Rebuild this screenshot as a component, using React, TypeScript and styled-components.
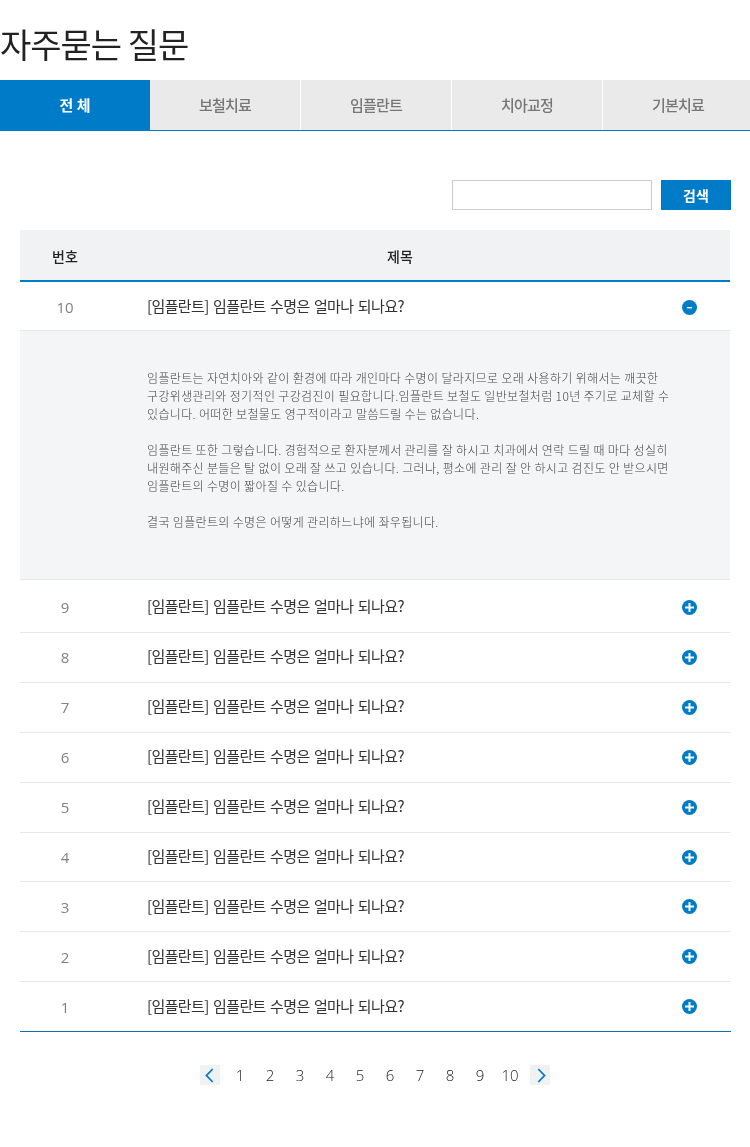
import * as React from 'react';
import styled, { createGlobalStyle } from 'styled-components';

const BLUE = '#007bc7';
const KR = '"Noto Sans CJK KR", "Noto Sans", sans-serif';

const tabs = ['전 체', '보철치료', '임플란트', '치아교정', '기본치료'];
const rows = [
  { n: 9, height: 53, top: 2 },
  { n: 8, height: 50, lift: true },
  { n: 7, height: 50, lift: true },
  { n: 6, height: 50, lift: true },
  { n: 5, height: 50, lift: true },
  { n: 4, height: 49 },
  { n: 3, height: 50 },
  { n: 2, height: 50 },
  { n: 1, height: 49 },
];
const pages = [1, 2, 3, 4, 5, 6, 7, 8, 9, 10];
const question = '[임플란트] 임플란트 수명은 얼마나 되나요?';

const GlobalStyle = createGlobalStyle`
  html, body {
    margin: 0;
    padding: 0;
    background: #fff;
  }
  body {
    font-family: ${KR};
    color: #222;
  }
`;

const RoundIcon = ({ open }: { open?: boolean }) => (
  <svg width={15} height={15} viewBox="0 0 15 15">
    <circle cx={7.5} cy={7.5} r={7.5} fill={BLUE} />
    {open ? (
      <rect x={5} y={7} width={5} height={1.4} fill="#fff" />
    ) : (
      <>
        <rect x={3} y={6.5} width={9} height={2} fill="#fff" />
        <rect x={6.5} y={3} width={2} height={9} fill="#fff" />
      </>
    )}
  </svg>
);

const Chevron = ({ next }: { next?: boolean }) => (
  <svg width={20} height={20} viewBox="0 0 20 20">
    <path
      d={next ? 'M8.3 4 L14.5 10.5 L8.3 17' : 'M12.7 4 L6.5 10.5 L12.7 17'}
      fill="none"
      stroke={BLUE}
      strokeWidth={1.8}
    />
  </svg>
);

const App: React.FC = () => (
  <>
    <GlobalStyle />
    <Styled.Page>
      <Styled.Title>자주묻는 질문</Styled.Title>
      <Styled.Tabs>
        {tabs.map((tab, i) => (
          <Styled.Tab key={tab} $active={i === 0}>
            {tab}
          </Styled.Tab>
        ))}
      </Styled.Tabs>
      <Styled.Search>
        <Styled.Input type="text" />
        <Styled.SearchButton>검색</Styled.SearchButton>
      </Styled.Search>
      <Styled.Board>
        <Styled.Head>
          <Styled.HeadNo>번호</Styled.HeadNo>
          <Styled.HeadTitle>제목</Styled.HeadTitle>
        </Styled.Head>
        <Styled.Row $height={49} $top={2}>
          <Styled.No>10</Styled.No>
          <Styled.Question>{question}</Styled.Question>
          <Styled.Toggle>
            <RoundIcon open />
          </Styled.Toggle>
        </Styled.Row>
        <Styled.Answer>
          <p>
            임플란트는 자연치아와 같이 환경에 따라 개인마다 수명이 달라지므로 오래 사용하기 위해서는 깨끗한
            <br />
            구강위생관리와 정기적인 구강검진이 필요합니다.임플란트 보철도 일반보철처럼 10년 주기로 교체할 수
            <br />
            있습니다. 어떠한 보철물도 영구적이라고 말씀드릴 수는 없습니다.
          </p>
          <p>
            임플란트 또한 그렇습니다. 경험적으로 환자분께서 관리를 잘 하시고 치과에서 연락 드릴 때 마다 성실히
            <br />
            내원해주신 분들은 탈 없이 오래 잘 쓰고 있습니다. 그러나, 평소에 관리 잘 안 하시고 검진도 안 받으시면
            <br />
            임플란트의 수명이 짧아질 수 있습니다.
          </p>
          <p>결국 임플란트의 수명은 어떻게 관리하느냐에 좌우됩니다.</p>
        </Styled.Answer>
        {rows.map((row) => (
          <Styled.Row key={row.n} $height={row.height} $top={row.top ?? 0}>
            <Styled.No $lift={row.lift}>{row.n}</Styled.No>
            <Styled.Question $lift={row.lift}>{question}</Styled.Question>
            <Styled.Toggle>
              <RoundIcon />
            </Styled.Toggle>
          </Styled.Row>
        ))}
      </Styled.Board>
      <Styled.Pager>
        <Styled.Arrow>
          <Chevron />
        </Styled.Arrow>
        <Styled.Numbers>
          {pages.map((p) => (
            <Styled.PageNo key={p}>{p}</Styled.PageNo>
          ))}
        </Styled.Numbers>
        <Styled.Arrow>
          <Chevron next />
        </Styled.Arrow>
      </Styled.Pager>
    </Styled.Page>
  </>
);

const Styled = {
  Page: styled.div`
    width: 750px;
    height: 1147px;
    overflow: hidden;
    will-change: transform;
  `,
  Title: styled.h1`
    margin: 0;
    height: 80px;
    padding-top: 22px;
    box-sizing: border-box;
    font-size: 34px;
    line-height: 44px;
    font-weight: 400;
    letter-spacing: -1px;
    color: #222;
  `,
  Tabs: styled.div`
    display: grid;
    grid-template-columns: 150px 151px 151px 151px 147px;
    height: 51px;
    border-bottom: 1px solid ${BLUE};
    box-sizing: border-box;
  `,
  Tab: styled.div<{ $active?: boolean }>`
    display: flex;
    align-items: center;
    justify-content: center;
    padding-bottom: 2px;
    font-size: 15px;
    font-weight: ${(props) => (props.$active ? 700 : 500)};
    letter-spacing: ${(props) => (props.$active ? '0' : '-0.8px')};
    color: ${(props) => (props.$active ? '#fff' : '#777')};
    background: ${(props) => (props.$active ? BLUE : '#eaeaea')};
    border-right: 1px solid #fff;
    &:last-child {
      border-right: none;
      padding-left: 3px;
    }
    &:first-child {
      border-right: none;
    }
  `,
  Search: styled.div`
    display: flex;
    justify-content: flex-end;
    gap: 9px;
    height: 30px;
    margin-top: 49px;
    padding-right: 19px;
  `,
  Input: styled.input`
    width: 200px;
    height: 30px;
    box-sizing: border-box;
    border: 1px solid #ccc;
    background: #fff;
    padding: 0 8px;
    outline: none;
  `,
  SearchButton: styled.button`
    width: 70px;
    height: 30px;
    border: none;
    padding: 0;
    background: ${BLUE};
    color: #fff;
    font-family: ${KR};
    font-size: 14px;
    font-weight: 700;
  `,
  Board: styled.div`
    width: 711px;
    margin: 20px 0 0 20px;
    border-bottom: 1px solid #1170b5;
  `,
  Head: styled.div`
    display: grid;
    grid-template-columns: 90px 1fr;
    width: 710px;
    height: 52px;
    padding-top: 2px;
    box-sizing: border-box;
    background: #f1f2f4;
    border-bottom: 2px solid ${BLUE};
    font-size: 14px;
    font-weight: 500;
    color: #222;
    align-items: center;
    text-align: center;
  `,
  HeadNo: styled.div``,
  HeadTitle: styled.div`
    padding-right: 40px;
  `,
  Row: styled.div<{ $height: number; $top: number }>`
    display: grid;
    grid-template-columns: 90px 1fr 17px;
    align-items: center;
    height: ${(props) => props.$height}px;
    box-sizing: border-box;
    border-bottom: 1px solid #e8e8e8;
    padding: ${(props) => props.$top}px 33px 0 0;
    &:last-child {
      border-bottom: none;
    }
  `,
  No: styled.div<{ $lift?: boolean }>`
    margin-bottom: ${(props) => (props.$lift ? 2 : 0)}px;
    text-align: center;
    font-family: 'Open Sans', sans-serif;
    font-size: 15px;
    font-weight: 400;
    color: #808080;
  `,
  Question: styled.div<{ $lift?: boolean }>`
    padding-left: 37px;
    margin-bottom: ${(props) => (props.$lift ? 5 : 3)}px;
    font-size: 15px;
    font-weight: 400;
    letter-spacing: -0.6px;
    word-spacing: 1.5px;
    color: #333;
  `,
  Toggle: styled.div`
    display: flex;
    justify-content: center;
  `,
  Answer: styled.div`
    width: 710px;
    height: 249px;
    box-sizing: border-box;
    background: #f4f5f7;
    border-bottom: 1px solid #e8e8e8;
    padding: 38px 0 0 127px;
    font-size: 12px;
    font-weight: 300;
    line-height: 18px;
    letter-spacing: 0.35px;
    color: #444;
    white-space: nowrap;
    p {
      margin: 0 0 18px;
    }
  `,
  Pager: styled.div`
    display: flex;
    justify-content: center;
    align-items: center;
    height: 20px;
    margin-top: 33px;
    gap: 5px;
  `,
  Numbers: styled.div`
    display: flex;
  `,
  Arrow: styled.div`
    width: 20px;
    height: 20px;
    background: #f0f1f3;
    display: flex;
  `,
  PageNo: styled.div`
    width: 30px;
    text-align: center;
    font-family: 'Open Sans', sans-serif;
    font-size: 15px;
    font-weight: 300;
    color: #222;
  `,
};

export default App;
